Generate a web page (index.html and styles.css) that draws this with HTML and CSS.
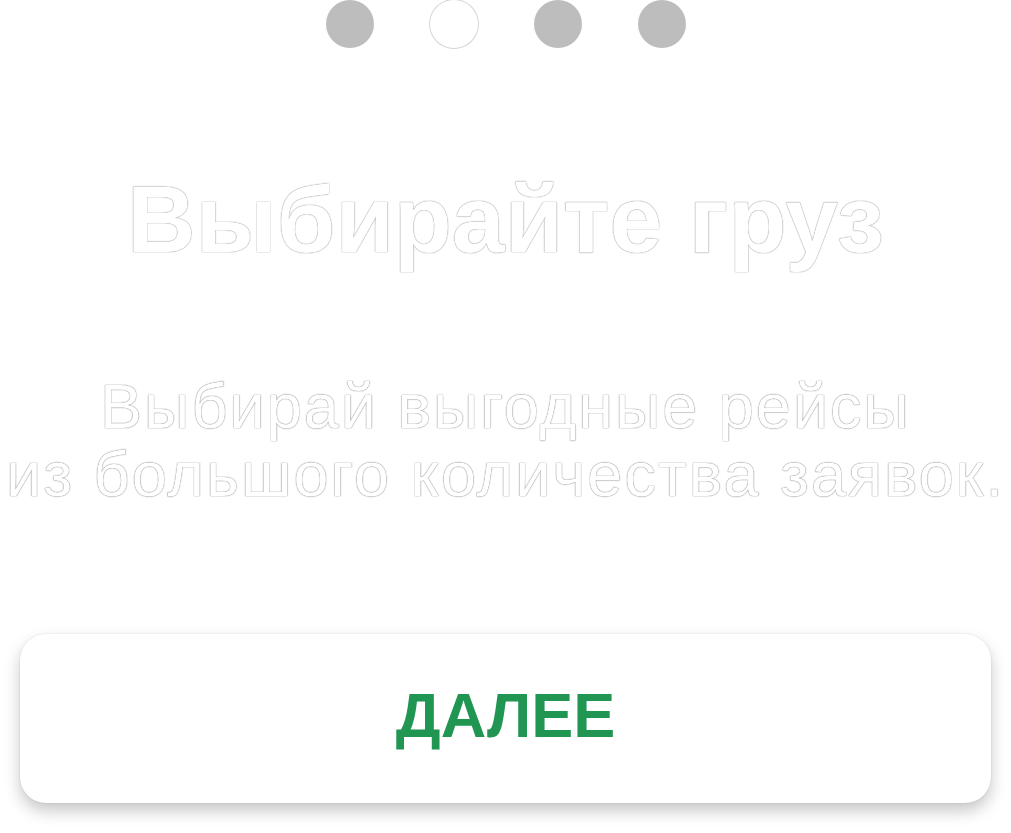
FILE: index.html
```html
<!DOCTYPE html>
<html lang="ru">
<head>
<meta charset="utf-8">
<link rel="stylesheet" href="styles.css">
</head>
<body>
<main class="screen">
  <div class="dots">
    <span class="dot"></span>
    <span class="dot dot-active"></span>
    <span class="dot"></span>
    <span class="dot"></span>
  </div>
  <h1 class="title">Выбирайте груз</h1>
  <p class="subtitle">Выбирай выгодные рейсы<br>из большого количества заявок.</p>
  <button class="next">ДАЛЕЕ</button>
</main>
</body>
</html>
```

FILE: styles.css
```css
html, body {
  margin: 0;
  padding: 0;
  background: #ffffff;
}
.screen {
  width: 1011px;
  height: 833px;
  display: flex;
  flex-direction: column;
  align-items: center;
  font-family: "Liberation Sans", Arial, sans-serif;
  overflow: hidden;
}
.dots {
  display: flex;
  gap: 56px;
  justify-content: center;
}
.dot {
  width: 48px;
  height: 48px;
  border-radius: 50%;
  background: #bdbdbd;
}
.dot-active {
  background: #ffffff;
  box-shadow: 0 0 0 1px #d4d4d4;
}
.title {
  margin: 116px 0 0;
  font-size: 95px;
  line-height: 110px;
  font-weight: 700;
  color: #ffffff;
  text-shadow: 0 0 1px #8a8a8a, 0 0 1px #8a8a8a;
  white-space: nowrap;
}
.subtitle {
  margin: 98px 0 0;
  font-size: 63px;
  line-height: 68px;
  font-weight: 400;
  letter-spacing: 2px;
  text-align: center;
  color: #ffffff;
  text-shadow: 0 0 1px #7a7a7a, 0 0 1px #7a7a7a;
  white-space: nowrap;
}
.next {
  margin-top: 126px;
  width: 971px;
  height: 169px;
  padding: 0 0 8px;
  border: none;
  border-radius: 26px;
  background: #ffffff;
  box-shadow: 0 8px 16px rgba(0,0,0,0.22), 0 0 2px rgba(0,0,0,0.12);
  color: #219653;
  font-family: "Liberation Sans", Arial, sans-serif;
  font-weight: 700;
  font-size: 63px;
  cursor: pointer;
}
```
